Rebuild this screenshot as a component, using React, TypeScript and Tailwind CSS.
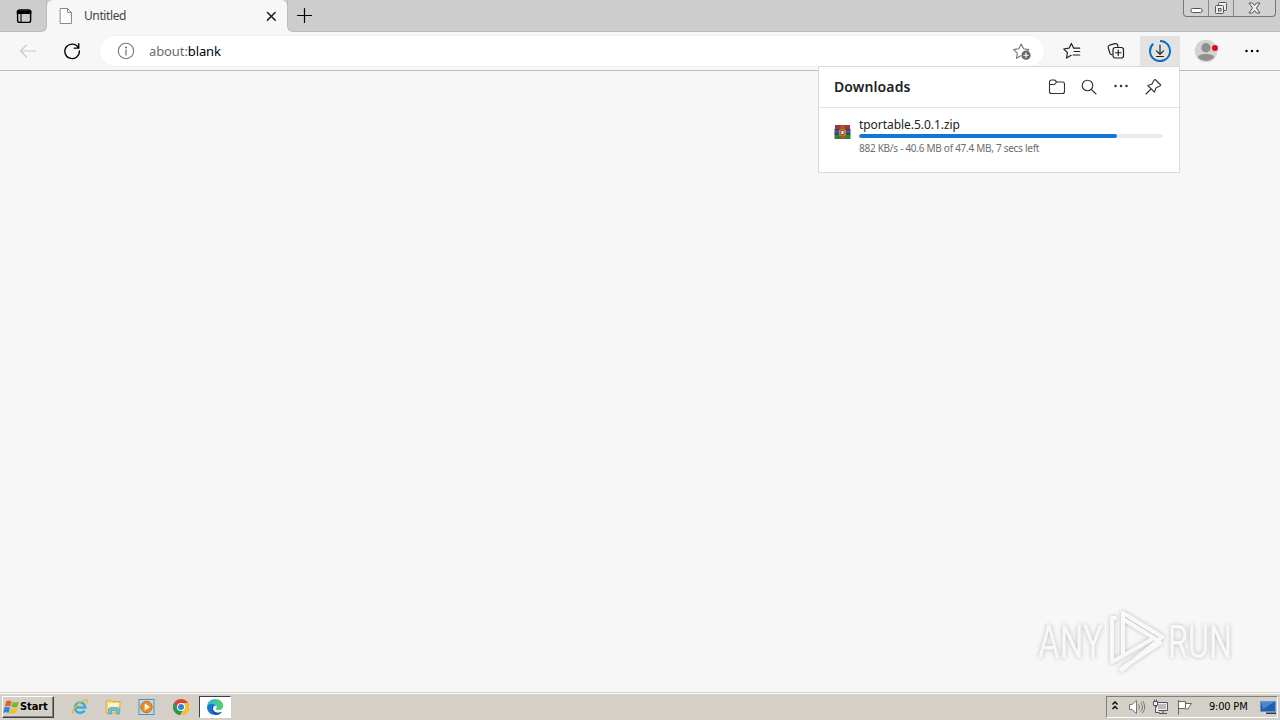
import type { ReactNode } from "react"

interface IconProps {
  size?: number
  className?: string
  width?: number
  children: ReactNode
}

function Icon({ size = 20, className = "", width = 1.1, children }: IconProps) {
  return (
    <svg
      width={size}
      height={size}
      viewBox="0 0 20 20"
      fill="none"
      stroke="currentColor"
      strokeWidth={width}
      strokeLinecap="round"
      strokeLinejoin="round"
      className={`block shrink-0 ${className}`}
    >
      {children}
    </svg>
  )
}

function Dots({ className = "" }: { className?: string }) {
  return (
    <Icon className={className}>
      <g fill="currentColor" stroke="none">
        <circle cx="4.5" cy="10" r="1.25" />
        <circle cx="10" cy="10" r="1.25" />
        <circle cx="15.5" cy="10" r="1.25" />
      </g>
    </Icon>
  )
}

function TabStrip() {
  return (
    <div className="flex h-8 items-start bg-[#f7f7f7]">
      <div className="flex h-8 w-[47px] shrink-0 items-center rounded-br-md border-r border-b border-[#bcbcbc] bg-[#cdcdcd] pl-[14px]">
        <Icon className="text-black" width={1.4}>
          <rect x="3.6" y="4" width="13" height="12.4" rx="2" />
          <path d="M3.6 5.5h13M3.6 7h13" strokeWidth="2" />
          <path d="M7 8v8" strokeWidth="1.1" />
        </Icon>
      </div>
      <div className="flex h-8 w-[240px] shrink-0 items-center bg-[#cdcdcd]">
        <div className="flex h-8 w-full items-center rounded-t-md bg-[#f7f7f7] pr-[6px] pl-[9px]">
          <Icon className="text-[#8a8a8a]" width={1}>
            <path d="M4.5 2.5h7l4 4v11h-11zM11.5 2.5v4h4" fill="#fff" />
          </Icon>
          <span className="ml-2 flex-1 font-['Noto_Sans'] text-[12px] leading-4 tracking-[-0.4px] text-[#444]">Untitled</span>
          <Icon className="text-[#222]" width={1.5}>
            <path d="M6.5 6.5l7.6 7.6M14.1 6.5l-7.600 7.600" />
          </Icon>
        </div>
      </div>
      <div className="flex h-8 flex-1 items-start rounded-bl-md border-b border-l border-[#bcbcbc] bg-[#cdcdcd]">
        <Icon className="mt-[5px] ml-[6px] text-black" width={1.2}>
          <path d="M10.5 3.500v14M3.500 10.500h14" />
        </Icon>
        <div className="mr-[4px] ml-auto flex h-[17px] rounded-b-[4px] border border-t-0 border-[#777] bg-[#d1d1d1] text-[#555]">
          <div className="flex w-[25px] items-center justify-center border-r border-[#888]">
            <svg width="13" height="13" viewBox="0 0 13 13" fill="#fff" stroke="currentColor">
              <rect x="1" y="6.500" width="11" height="4" rx="1.500" />
            </svg>
          </div>
          <div className="flex w-[25px] items-center justify-center border-r border-[#888]">
            <svg width="14" height="14" viewBox="0 0 14 14" fill="#eee" stroke="currentColor">
              <rect x="4.500" y="1.500" width="8" height="8" rx="1" />
              <rect x="1.500" y="4.500" width="8" height="8" rx="1" />
              <rect x="4.500" y="7.500" width="2.500" height="2.500" />
            </svg>
          </div>
          <div className="flex w-[41px] items-center justify-center">
            <svg width="13" height="12" viewBox="0 0 13 12" fill="#eee" stroke="currentColor" strokeLinejoin="round">
              <path d="M1 1h3.500l2 2.600L8.500 1H12L8.400 6l3.600 5H8.500l-2-2.600L4.500 11H1l3.600-5z" />
            </svg>
          </div>
        </div>
      </div>
    </div>
  )
}

function Toolbar() {
  return (
    <div className="flex h-[39px] items-start border-b border-[#bdbdbd] bg-[#f7f7f7] pt-1 text-[#222]">
      <div className="flex h-[30px] w-[100px] shrink-0 items-center gap-6 pl-[18px]">
        <Icon className="text-[#c9c9c9]">
          <path d="M2.500 10h15M8.500 4L2.500 10l6 6" />
        </Icon>
        <Icon width={1.3} className="text-black">
          <path d="M16.600 7A7.300 7.300 0 1 0 17.400 10M16.800 2.600v4.600h-4.600" />
        </Icon>
      </div>
      <div className="flex h-[30px] w-[944px] shrink-0 items-center rounded-full bg-white pr-[12px] pl-4 shadow-[0_0_0_1px_#f2f2f2]">
        <Icon className="text-[#777]">
          <circle cx="10" cy="10" r="7.700" />
          <path d="M10 9v5" strokeWidth="1.300" />
          <circle cx="10" cy="6.500" r=".5" fill="currentColor" />
        </Icon>
        <span className="ml-[13px] flex-1 font-['Noto_Sans'] text-[13px] leading-4 tracking-[-0.1px] text-black">
          <span className="text-[#6b6b6b]">about:</span>blank
        </span>
        <Icon className="text-[#777]">
          <path d="M8.500 15l-4 2.300.8-5.100-3.700-3.600 5.200-.8L9.200 3l2.400 4.800 5.200.8-1.500 1.400" />
          <circle cx="14" cy="14.200" r="4.600" fill="#666" stroke="none" />
          <path d="M14 11.900v4.600M11.700 14.200h4.600" stroke="#fff" />
        </Icon>
      </div>
      <div className="flex h-[30px] flex-1 items-center">
        <Icon className="ml-[18px]" width={1.2}>
          <path d="M9.200 14.300l-4.700 2.700.9-5.400L1.800 8l5.200-.8L9.400 2.400l2.300 4.800h6M12 10.500h5.700M11.200 14h6.500" />
        </Icon>
        <Icon className="ml-6" width={1.2}>
          <path d="M6 13.500c-1.300.2-2-.4-2.200-1.500L2.200 6.600c-.3-1.200.1-2 1.300-2.400L9 2.700c1.300-.3 2.200 0 2.600 1.300l.4 1.500" />
          <rect x="7" y="6.500" width="10.500" height="10.500" rx="2.200" />
          <path d="M12.250 9v5.500M9.500 11.750H15" />
        </Icon>
        <div className="ml-[14px] flex h-[30px] w-10 shrink-0 items-center justify-center bg-[#e3e3e3]">
          <svg width="24" height="24" viewBox="0 0 24 24" fill="none" strokeLinecap="round" strokeLinejoin="round">
            <path d="M12 2A10 10 0 1 1 5.200 4.700" stroke="#0f6cbd" strokeWidth="2" strokeLinecap="butt" />
            <path d="M12 6v9M8.500 11.800L12 15.300l3.500-3.500M8.500 17.500h7" stroke="#222" strokeWidth="1.200" />
          </svg>
        </div>
        <svg className="ml-[14px] shrink-0" width="26" height="24" viewBox="0 0 26 24">
          <circle cx="12" cy="12" r="11.300" fill="#d4d3d1" />
          <circle cx="12" cy="8.800" r="4.700" fill="#918f8d" />
          <path d="M4 18.600c0-2.800 4.200-3.600 8-3.600s8 .8 8 3.600a11.300 11.300 0 0 1-16 0z" fill="#918f8d" />
          <circle cx="21" cy="9" r="3" fill="#e00b1c" />
        </svg>
        <Dots className="ml-[22px] text-black" />
      </div>
    </div>
  )
}

function RarIcon() {
  return (
    <svg width="17" height="16" viewBox="0 0 17 16" className="block shrink-0">
      <path d="M1 1h15v4.500H1z" fill="#a93436" />
      <path d="M.5 5.500h16V10H.5z" fill="#3b58a8" />
      <path d="M.5 10h16v5H.5z" fill="#397d35" />
      <path d="M.5 5.500h16M.5 10h16" stroke="#252a36" strokeWidth=".8" />
      <path d="M6.500 1h4v14h-4z" fill="#a65b2a" />
      <path d="M5 5.500h7v6H5z" fill="#d9822f" />
      <path d="M7 6.500h3v4H7z" fill="#fff2cf" stroke="#8e2b24" strokeWidth=".7" />
    </svg>
  )
}

function DownloadsPanel() {
  return (
    <div className="absolute top-[66px] left-[818px] z-10 h-[107px] w-[362px] border border-[#dadada] bg-white text-[#333]">
      <div className="flex h-[41px] items-center border-b border-[#e5e5e5] pr-4 pl-[15px]">
        <h2 className="flex-1 font-['Noto_Sans'] text-[14px] leading-5 font-semibold tracking-[0.1px] text-[#222]">Downloads</h2>
        <div className="flex gap-3">
          <Icon>
            <path d="M2.500 5a2 2 0 0 1 2-2h3.200l2 2h5.800a2 2 0 0 1 2 2v7.500a2 2 0 0 1-2 2h-11a2 2 0 0 1-2-2zM2.500 7.500h5L9.700 5" />
          </Icon>
          <Icon>
            <circle cx="8.500" cy="8.500" r="5.300" />
            <path d="M12.300 12.300l4.700 4.700" />
          </Icon>
          <Dots className="-mt-px" />
          <Icon>
            <path d="M12.200 2.500l5.500 5.500c-.4 1.200-1 1.200-2 1.600l-2.800 1.300-1.400 4.300-6.700-6.700L9 7l1.500-2.900c.4-.8.8-1.500 1.700-1.600zM8 12l-5 5" />
          </Icon>
        </div>
      </div>
      <div className="flex items-start pt-[9px] pr-4 pl-[15px]">
        <div className="mt-[7px]"><RarIcon /></div>
        <div className="ml-2 flex-1 whitespace-nowrap font-['Noto_Sans']">
          <div className="h-[17px] text-[12px] leading-4 tracking-[-0.05px] text-[#222]">tportable.5.0.1.zip</div>
          <div className="h-1 overflow-hidden rounded-full bg-[#ebebeb]">
            <div className="h-full w-[85%] rounded-full bg-[#1078d4]" />
          </div>
          <div className="mt-[2px] text-[10px] leading-4 tracking-[-0.27px] text-[#6c6c6c]">882 KB/s - 40.6 MB of 47.4 MB, 7 secs left</div>
        </div>
      </div>
    </div>
  )
}

function Watermark() {
  return (
    <svg className="absolute top-[604px] left-[1030px] overflow-visible drop-shadow-[0_0_2px_#bbb]" width="230" height="80" viewBox="0 0 230 80">
      <g fill="#f8f8f8" fontFamily="Roboto" fontSize="47">
        <text x="8" y="54" textLength="65" lengthAdjust="spacingAndGlyphs">ANY</text>
        <text x="138" y="54" textLength="64" lengthAdjust="spacingAndGlyphs">RUN</text>
      </g>
      <g fill="none" stroke="#f8f8f8" strokeWidth="4" strokeLinejoin="round" strokeLinecap="round">
        <path d="M85 14h-3v44l42-24M93 9v41M93 9l39 24-40 33M93 9l38 23M93 15l36 22M91 65l39-26" />
      </g>
    </svg>
  )
}

function StartFlag() {
  return (
    <svg width="17" height="17" viewBox="0 0 16 16" className="block shrink-0">
      <path d="M3 2c2-1 3.500-.8 5 .2L6.800 7c-1.700-1-3.200-1-5 0z" fill="#e96024" />
      <path d="M9 2.600c2 1 3.800.8 6-.3l-1.300 5c-2 1-4 1-6 0z" fill="#79b833" />
      <path d="M1.400 8c2-.9 3.500-.8 5.200.2l-1.300 5c-1.500-1-3.300-1-5.200-.2z" fill="#3987cf" />
      <path d="M7.500 8.500c2 1 4 .8 6-.2l-1.400 4.900c-2 1-4 1-6 .2z" fill="#f5bd26" />
    </svg>
  )
}

function Taskbar() {
  return (
    <div className="flex h-7 items-center border-t border-[#d4d0c8] bg-[#d4d0c8] pl-[2px] font-['DejaVu_Sans'] text-black shadow-[inset_0_1px_0_#fff]">
      <div className="mt-[1px] flex h-[22px] w-[52px] shrink-0 items-center border border-t-white border-r-[#404040] border-b-[#404040] border-l-white shadow-[inset_-1px_-1px_0_#808080]">
        <StartFlag />
        <span className="font-['DejaVu_Sans_Condensed','DejaVu_Sans'] text-[11px] leading-4 font-bold tracking-[-0.1px]">Start</span>
      </div>
      <div className="ml-[17px] flex items-center gap-4">
        <svg width="18" height="18" viewBox="0 0 18 18" fill="none">
          <path d="M13.500 12.500A5.200 5.200 0 1 1 14.300 9.500H4.500" stroke="#3ba9e2" strokeWidth="2.600" />
          <path d="M2 16C-.5 12 10 2 15 2c2 0 2 1.500 1 3.500" stroke="#e9ba36" strokeWidth="1.300" />
        </svg>
        <svg width="17" height="18" viewBox="0 0 17 18">
          <path d="M1 3l5-1 1.500 1.500H15V15H1z" fill="#f2d36c" stroke="#c9a644" strokeWidth=".7" />
          <path d="M3 5h11v5H3z" fill="#fff4bd" />
          <path d="M3.500 16v-4q0-2.500 2.500-2.500h6q2.500 0 2.500 2.500v4h-3v-3.500h-5V16z" fill="#73bddd" stroke="#4b91b5" strokeWidth=".6" />
        </svg>
        <svg width="17" height="18" viewBox="0 0 17 18">
          <rect x="1" y="1.500" width="15" height="15" fill="#b6dcf3" stroke="#4e8ec2" />
          <circle cx="8.500" cy="9" r="5.700" fill="#f18a18" stroke="#d56b08" />
          <path d="M6.700 5.500l5.300 3.500-5.300 3.500z" fill="#fff" />
        </svg>
        <svg className="ml-px" width="18" height="18" viewBox="0 0 18 18">
          <circle cx="9" cy="9" r="8" fill="#db4437" />
          <path d="M2.100 5A8 8 0 0 0 8 17l4-6-6 0z" fill="#219b55" />
          <path d="M9 5h6.900A8 8 0 0 1 8 17l4.500-7z" fill="#f4c52a" />
          <circle cx="9" cy="9" r="4" fill="#fff" />
          <circle cx="9" cy="9" r="3" fill="#3d7ddc" />
        </svg>
      </div>
      <div className="ml-[9px] flex h-[22px] w-8 items-center justify-center border border-t-[#404040] border-r-white border-b-white border-l-[#404040] bg-white">
        <svg width="18" height="18" viewBox="0 0 18 18">
          <path d="M1 9C1 4 4.500 1 9 1c5 0 8 3.300 8 6.800 0 3-2.300 4.200-4.500 4.200-1.800 0-2.600-.7-2.300-1.200C12 8 10 5.500 6.500 5.500 3.500 5.500 1.500 7.500 1 9z" fill="#35c1c4" />
          <path d="M11 1.300c3.800.8 6 3.600 6 6.500 0 3-2.300 4.200-4.500 4.200-1.800 0-2.600-.7-2.300-1.200 2-3-.2-5-2.200-5.300z" fill="#54cb72" />
          <path d="M1 9c.8-3 3.500-4 6-3.500 2 .4 3.500 1.800 3.600 3.300-.7-1-1.900-1.300-2.700-.8-2 2-1.200 5.500 2.500 6.500 2 .5 4 0 5.500-.8C14.500 16 12 17 9.500 17 4.500 17 1 13.500 1 9z" fill="#1479cb" />
          <path d="M6 9c-1 4 1 7.500 4.500 8 2.200-.2 4.200-1.500 5.400-3.300-1.500.8-3.500 1.300-5.500.8C6.700 13.500 6 10 7.900 8 7 7.800 6.300 8.200 6 9z" fill="#1455a5" />
        </svg>
      </div>
      <div className="mt-[1px] mr-[2px] ml-auto flex h-[22px] w-[172px] items-center border border-t-[#808080] border-r-white border-b-white border-l-[#808080] pl-1">
        <svg className="-mt-[2px]" width="8" height="12" viewBox="0 0 8 12" fill="none" stroke="#000" strokeWidth="1.400">
          <path d="M1.500 4.500L4 2l2.500 2.500M1.500 9L4 6.500 6.500 9" />
        </svg>
        <svg className="ml-[9px]" width="18" height="16" viewBox="0 0 18 16" fill="none" stroke="#777">
          <path d="M1.500 5.500H4l4.500-4v13L4 10.500H1.500z" fill="#fff" />
          <path d="M10.500 5.500q2 2.500 0 5M12.500 3.500q4 4.500 0 9M14.500 2q4.500 6 0 12" />
        </svg>
        <svg className="ml-[6px]" width="18" height="16" viewBox="0 0 18 16" fill="#eee" stroke="#555">
          <path d="M4.500 3.500h11v8h-11zM7 14.500h8M11 11.500v3" />
          <path d="M6 5h8v5H6z" fill="#bbb" stroke="none" />
          <path d="M1.500 2.500h4v4h-4zM2.500.5v2M4.500.5v2M3.500 6.500v7h4" />
        </svg>
        <svg className="ml-[6px]" width="18" height="16" viewBox="0 0 18 16" fill="#fff" stroke="#666">
          <path d="M2.500 1v14.500M2.500 2.500h7v7h-7zM9.500 4.500h6l-2 3-1.500 2.500H9.500" />
        </svg>
        <span className="ml-[15px] w-[46px] whitespace-nowrap font-['DejaVu_Sans_Condensed','DejaVu_Sans'] text-[11px] leading-4 tracking-[-0.2px]">9:00 PM</span>
        <svg className="mr-[1px] ml-auto" width="16" height="15" viewBox="0 0 16 15">
          <path d="M.5 1.500h15v10H.5z" fill="#245fab" stroke="#6697cb" />
          <path d="M1 2h13L3 9z" fill="#478bd5" />
          <path d="M1 12.500h5v1.500H1z" fill="#c8d8e8" />
          <path d="M6 12.500h10V14H6z" fill="#253d5c" />
        </svg>
      </div>
    </div>
  )
}

export default function App() {
  return (
    <div className="relative flex h-[720px] w-[1280px] flex-col overflow-hidden bg-[#f7f7f7]">
      <TabStrip />
      <Toolbar />
      <main className="flex-1" />
      <DownloadsPanel />
      <Watermark />
      <Taskbar />
    </div>
  )
}
